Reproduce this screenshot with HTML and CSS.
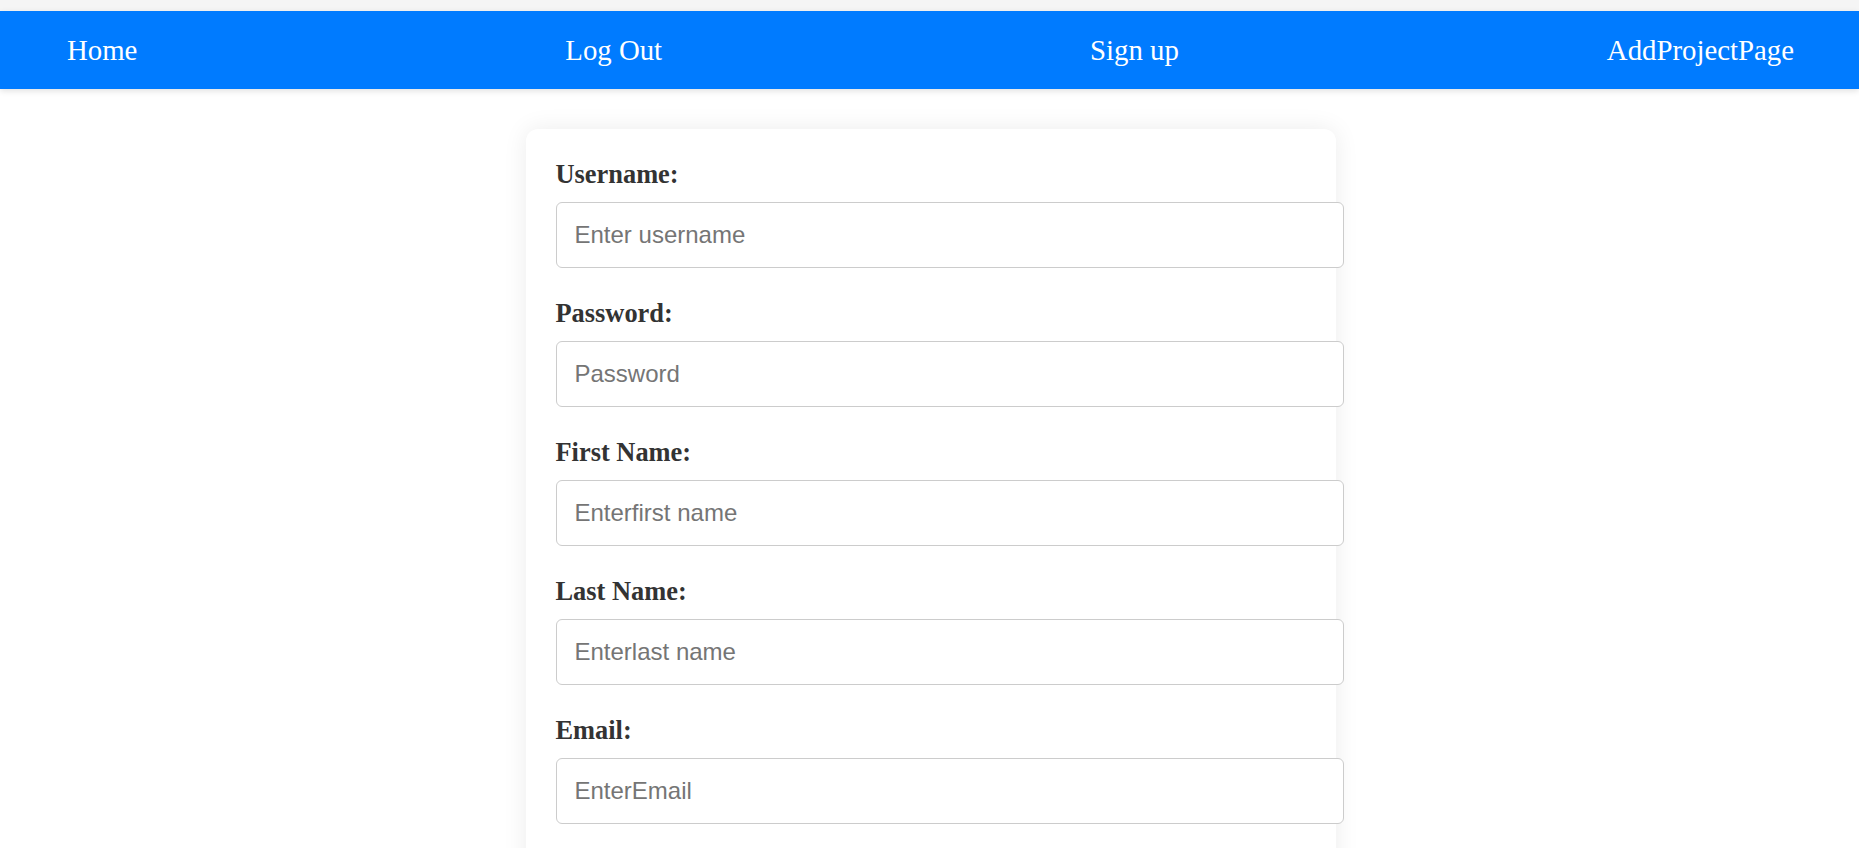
FILE: index.html
```html
<!DOCTYPE html>
<html lang="en">
<head>
<meta charset="utf-8">
<title>Sign up</title>
<link rel="stylesheet" href="styles.css">
</head>
<body>
<div class="top-strip"></div>
<nav class="navbar">
  <a class="nav-link" href="#">Home</a>
  <a class="nav-link" href="#">Log Out</a>
  <a class="nav-link" href="#">Sign up</a>
  <a class="nav-link" href="#">AddProjectPage</a>
</nav>
<main class="card">
  <form class="form">
    <div class="form-group">
      <label class="label" for="username">Username:</label>
      <input class="input" id="username" type="text" placeholder="Enter username">
    </div>
    <div class="form-group">
      <label class="label" for="password">Password:</label>
      <input class="input" id="password" type="password" placeholder="Password">
    </div>
    <div class="form-group">
      <label class="label" for="first">First Name:</label>
      <input class="input" id="first" type="text" placeholder="Enterfirst name">
    </div>
    <div class="form-group">
      <label class="label" for="last">Last Name:</label>
      <input class="input" id="last" type="text" placeholder="Enterlast name">
    </div>
    <div class="form-group">
      <label class="label" for="email">Email:</label>
      <input class="input" id="email" type="text" placeholder="EnterEmail">
    </div>
  </form>
</main>
</body>
</html>
```
FILE: styles.css
```css
html, body {
  margin: 0;
  padding: 0;
  background: #ffffff;
  font-family: "Liberation Serif", "Times New Roman", serif;
}

.top-strip {
  height: 11px;
  background: #f5f5f5;
}

.navbar {
  display: flex;
  justify-content: space-between;
  align-items: center;
  height: 78px;
  padding: 0 65px 0 67px;
  background: #007bff;
  box-shadow: 0 2px 6px rgba(0, 0, 0, 0.12);
  position: relative;
}

.nav-link {
  color: #ffffff;
  text-decoration: none;
  font-size: 28.8px;
}

.card {
  width: 750px;
  margin: 40px auto 0;
  padding: 30px 30px 30px 30px;
  background: #ffffff;
  border-radius: 12px;
  box-shadow: 0 0 24px rgba(0, 0, 0, 0.08);
  position: relative;
  left: 1px;
}

.form-group {
  margin-bottom: 30px;
}

.label {
  display: block;
  margin-bottom: 12px;
  font-weight: bold;
  font-size: 26.4px;
  color: #333333;
}

.input {
  display: block;
  width: 100%;
  padding: 18px;
  border: 1px solid #cccccc;
  border-radius: 6px;
  font-family: "Liberation Sans", Arial, sans-serif;
  font-size: 24px;
  color: #333333;
  background: #ffffff;
}

.input::placeholder {
  color: #757575;
}
```
